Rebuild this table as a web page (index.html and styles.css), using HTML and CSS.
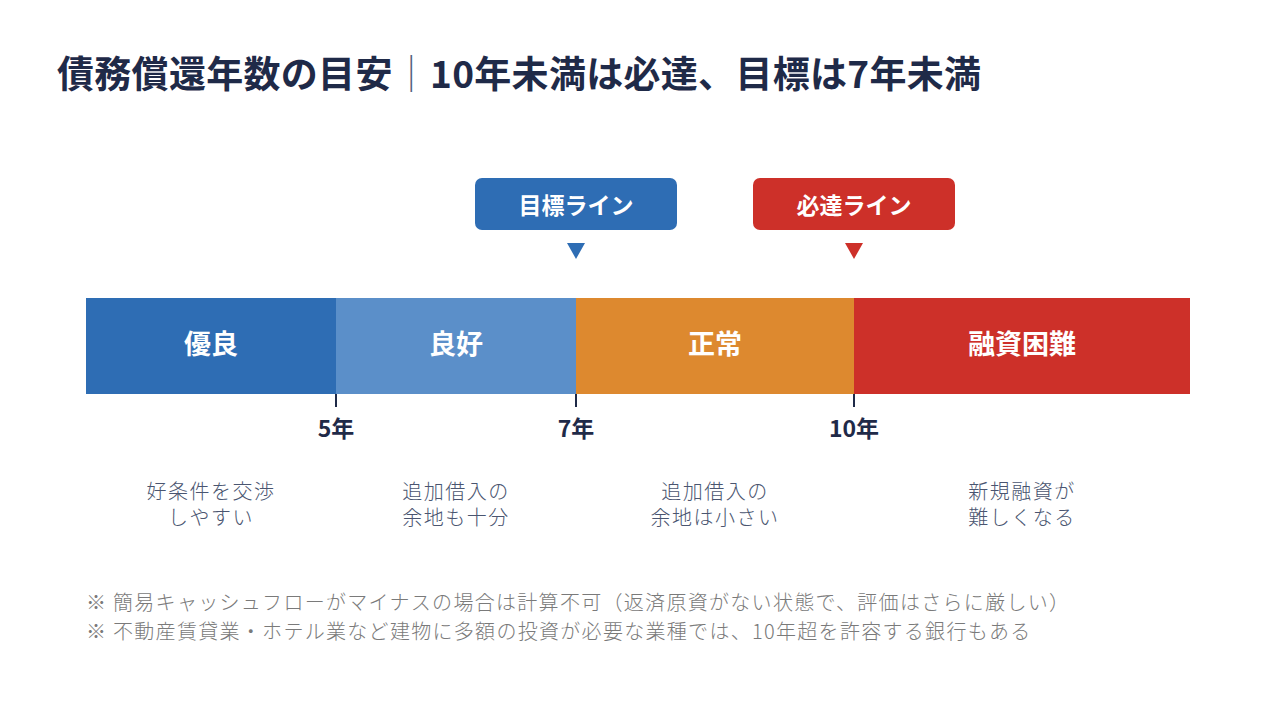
FILE: index.html
```html
<!DOCTYPE html>
<html lang="ja">
<head>
<meta charset="utf-8">
<title>債務償還年数の目安</title>
<link rel="stylesheet" href="styles.css">
</head>
<body>
<div class="page">
  <h1 class="title">債務償還年数の目安<span class="sep">｜</span>10年未満は必達、目標は7年未満</h1>

  <div class="chart">
    <div class="markers">
      <div class="marker marker-target">
        <div class="badge badge-blue">目標ライン</div>
        <div class="tri tri-blue"></div>
      </div>
      <div class="marker marker-must">
        <div class="badge badge-red">必達ライン</div>
        <div class="tri tri-red"></div>
      </div>
    </div>

    <div class="bar">
      <div class="seg seg-1">優良</div>
      <div class="seg seg-2">良好</div>
      <div class="seg seg-3">正常</div>
      <div class="seg seg-4">融資困難</div>
    </div>

    <div class="ticks">
      <div class="tick tick-2"><span class="tick-line"></span><span class="tick-label">5年</span></div>
      <div class="tick tick-3"><span class="tick-line"></span><span class="tick-label">7年</span></div>
      <div class="tick tick-4"><span class="tick-line"></span><span class="tick-label">10年</span></div>
    </div>

    <div class="descs">
      <p class="desc">好条件を交渉<br>しやすい</p>
      <p class="desc">追加借入の<br>余地も十分</p>
      <p class="desc">追加借入の<br>余地は小さい</p>
      <p class="desc">新規融資が<br>難しくなる</p>
    </div>
  </div>

  <div class="notes">
    <p class="note">※ 簡易キャッシュフローがマイナスの場合は計算不可（返済原資がない状態で、評価はさらに厳しい）</p>
    <p class="note">※ 不動産賃貸業・ホテル業など建物に多額の投資が必要な業種では、10年超を許容する銀行もある</p>
  </div>
</div>
</body>
</html>
```

FILE: styles.css
```css
* { box-sizing: border-box; }

html, body {
  margin: 0;
  padding: 0;
  background: #ffffff;
}

body {
  font-family: "Noto Sans CJK JP", "Noto Sans", sans-serif;
  color: #1f2a48;
  width: 1280px;
  height: 720px;
  overflow: hidden;
}

.page {
  padding: 50px 0 0 0;
}

.title {
  margin: 0 0 0 57px;
  font-size: 37px;
  line-height: 44px;
  font-weight: 700;
  letter-spacing: 0.3px;
  color: #1f2a48;
  white-space: nowrap;
}

.sep {
  color: #55617e;
  font-weight: 400;
}

.chart {
  margin: 84px 0 0 86px;
  width: 1104px;
}

.markers,
.bar,
.ticks,
.descs {
  display: grid;
  grid-template-columns: 250px 240px 278px 336px;
}

.markers {
  height: 81px;
  margin-bottom: 39px;
}

.marker {
  display: flex;
  flex-direction: column;
  align-items: center;
  width: 202px;
  margin-left: -101px;
}

.marker-target { grid-column: 3; }
.marker-must { grid-column: 4; }

.badge {
  width: 202px;
  height: 52px;
  border-radius: 7px;
  display: flex;
  align-items: center;
  justify-content: center;
  color: #ffffff;
  font-size: 23px;
  font-weight: 700;
  line-height: 1;
}

.badge-blue { background: #2e6db4; }
.badge-red { background: #cd3029; }

.tri {
  margin-top: 13px;
  width: 0;
  height: 0;
  border-left: 9px solid transparent;
  border-right: 9px solid transparent;
  border-top: 16px solid #2e6db4;
}

.tri-red { border-top-color: #cd3029; }

.bar {
  height: 96px;
}

.seg {
  display: flex;
  align-items: center;
  justify-content: center;
  color: #ffffff;
  font-size: 27px;
  font-weight: 700;
  line-height: 1;
  padding-bottom: 7px;
}

.seg-1 { background: #2e6db4; }
.seg-2 { background: #5b8fc9; }
.seg-3 { background: #dd892f; }
.seg-4 { background: #cd3029; }

.ticks {
  height: 49px;
}

.tick {
  display: flex;
  flex-direction: column;
  align-items: center;
  width: 80px;
  margin-left: -40px;
}

.tick-2 { grid-column: 2; }
.tick-3 { grid-column: 3; }
.tick-4 { grid-column: 4; }

.tick-line {
  display: block;
  width: 2px;
  height: 13px;
  background: #1f2a48;
}

.tick-label {
  display: block;
  margin-top: 6px;
  font-size: 23px;
  line-height: 28px;
  font-weight: 700;
  color: #1f2a48;
}

.descs {
  margin-top: 35px;
}

.desc {
  margin: 0;
  text-align: center;
  font-size: 20px;
  font-weight: 300;
  letter-spacing: 1.5px;
  line-height: 26px;
  color: #4a5570;
}

.notes {
  margin: 57px 0 0 86px;
}

.note {
  margin: 0;
  font-size: 20px;
  font-weight: 300;
  letter-spacing: 1.3px;
  line-height: 29px;
  color: #7a7a7a;
  white-space: nowrap;
}
```
